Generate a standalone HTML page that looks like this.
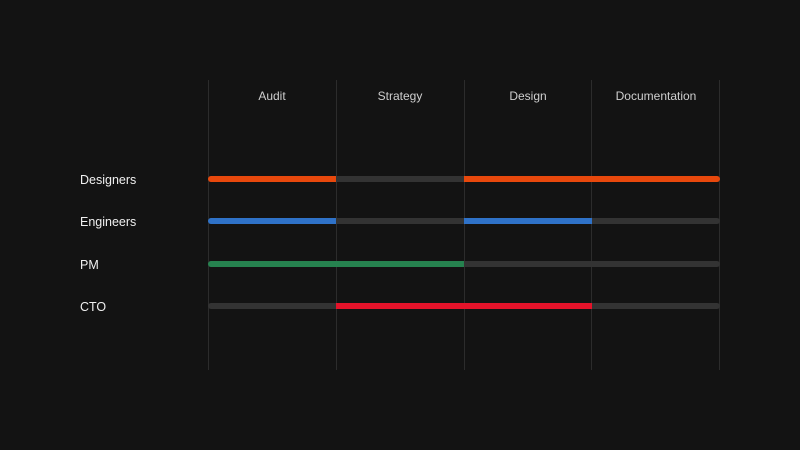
<!DOCTYPE html><html><head><style>
body{margin:0;width:800px;height:450px;background:#131313;position:relative;overflow:hidden;font-family:"Liberation Sans",sans-serif}
.v{position:absolute;top:80px;height:290px;width:1px;background:#2c2c2c}
.h{position:absolute;top:89px;width:128px;text-align:center;color:#cfcfcf;font-size:12px}
.l{position:absolute;left:80px;color:#f0f0f0;font-size:12.5px}
.b{position:absolute;height:6px}
</style></head><body>
<div class="v" style="left:208px"></div><div class="v" style="left:336px"></div><div class="v" style="left:464px"></div><div class="v" style="left:591px"></div><div class="v" style="left:719px"></div>
<div class="h" style="left:208px">Audit</div><div class="h" style="left:336px">Strategy</div><div class="h" style="left:464px">Design</div><div class="h" style="left:592px">Documentation</div>
<div class="l" style="top:173px">Designers</div><div class="l" style="top:215px">Engineers</div><div class="l" style="top:258px">PM</div><div class="l" style="top:300px">CTO</div>
<div class="b" style="top:176px;left:208px;width:512px;background:#333;border-radius:3px"></div>
<div class="b" style="top:176px;left:208px;width:128px;background:#e8480c;border-radius:3px 0 0 3px"></div>
<div class="b" style="top:176px;left:464px;width:256px;background:#e8480c;border-radius:0 3px 3px 0"></div>
<div class="b" style="top:218px;left:208px;width:512px;background:#333;border-radius:3px"></div>
<div class="b" style="top:218px;left:208px;width:128px;background:#2f72c8;border-radius:3px 0 0 3px"></div>
<div class="b" style="top:218px;left:464px;width:128px;background:#2f72c8"></div>
<div class="b" style="top:261px;left:208px;width:512px;background:#333;border-radius:3px"></div>
<div class="b" style="top:261px;left:208px;width:256px;background:#26824f;border-radius:3px 0 0 3px"></div>
<div class="b" style="top:303px;left:208px;width:512px;background:#333;border-radius:3px"></div>
<div class="b" style="top:303px;left:336px;width:256px;background:#e5132a"></div>
</body></html>
